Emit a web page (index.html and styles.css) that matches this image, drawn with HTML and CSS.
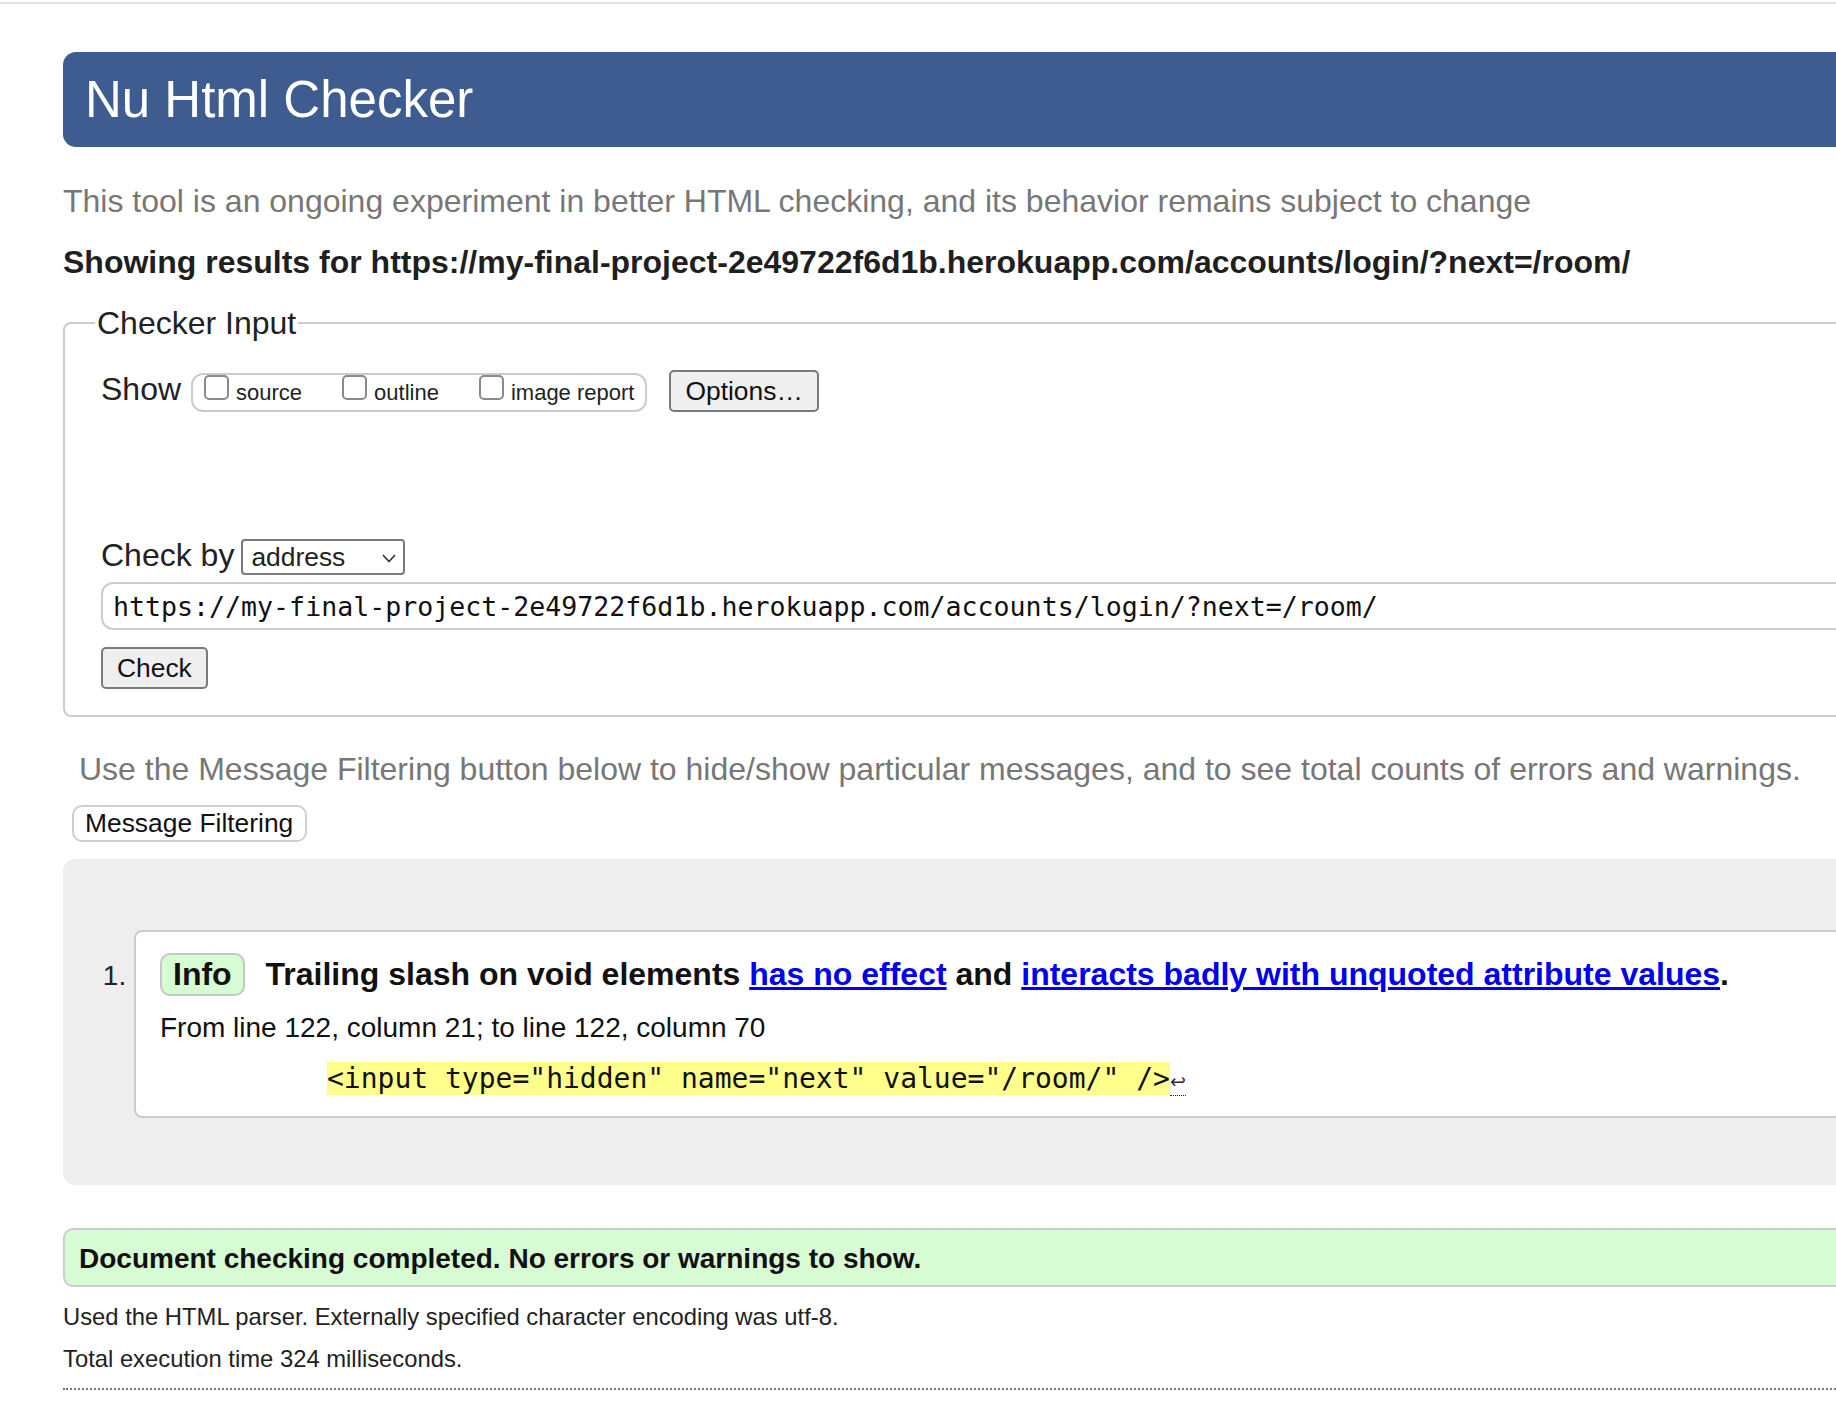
FILE: index.html
```html
<!DOCTYPE html>
<html lang="en">
<head>
<meta charset="utf-8">
<title>Showing results for https://my-final-project-2e49722f6d1b.herokuapp.com/accounts/login/?next=/room/ - Nu Html Checker</title>
<link rel="stylesheet" href="styles.css">
</head>
<body>
<div class="topline"></div>
<div class="page">
  <h1 class="title">Nu Html Checker</h1>
  <p class="intro">This tool is an ongoing experiment in better HTML checking, and its behavior remains subject to change</p>
  <p class="showing">Showing results for https://my-final-project-2e49722f6d1b.herokuapp.com/accounts/login/?next=/room/</p>

  <form class="checker">
    <fieldset class="input-set">
      <legend>Checker Input</legend>
      <div class="show-row">
        <span class="show-label">Show</span>
        <span class="show-group">
          <label class="opt"><input type="checkbox" class="box">source</label>
          <label class="opt"><input type="checkbox" class="box">outline</label>
          <label class="opt"><input type="checkbox" class="box">image report</label>
        </span>
        <button type="button" class="btn">Options…</button>
      </div>
      <div class="by-row">
        <span class="by-label">Check by</span>
        <span class="select"><span class="select-text">address</span><svg class="chev" width="14" height="9" viewBox="0 0 14 9"><path d="M1 1 L7 7.5 L13 1" fill="none" stroke="#333" stroke-width="1.6"/></svg></span>
      </div>
      <input class="url" type="text" value="https://my-final-project-2e49722f6d1b.herokuapp.com/accounts/login/?next=/room/">
      <div class="check-wrap"><button type="button" class="btn">Check</button></div>
    </fieldset>
  </form>

  <p class="filter-note">Use the Message Filtering button below to hide/show particular messages, and to see total counts of errors and warnings.</p>
  <button type="button" class="filter-btn">Message Filtering</button>

  <div class="results">
    <ol class="messages">
      <li class="message">
        <p class="msg-head"><strong class="badge">Info</strong> <span>Trailing slash on void elements <a href="#">has no effect</a> and <a href="#">interacts badly with unquoted attribute values</a>.</span></p>
        <p class="location">From line 122, column 21; to line 122, column 70</p>
        <p class="extract"><code><mark class="hl">&lt;input type="hidden" name="next" value="/room/" /&gt;</mark><span class="lf">↩</span></code></p>
      </li>
    </ol>
  </div>

  <p class="done">Document checking completed. No errors or warnings to show.</p>
  <p class="details">Used the HTML parser. Externally specified character encoding was utf-8.</p>
  <p class="details details-time">Total execution time 324 milliseconds.</p>
  <div class="footer-rule"></div>
</div>
</body>
</html>
```

FILE: styles.css
```css
html {
  overflow: hidden;
}

body {
  margin: 0;
  font-family: "Liberation Sans", Arial, sans-serif;
  color: #222;
  background: #fff;
}

.topline {
  margin-top: 2px;
  height: 2px;
  background: #e3e3e3;
}

.page {
  width: 2000px;
  padding-left: 63px;
}

.title {
  margin: 48px 0 0;
  height: 95px;
  padding-left: 22px;
  background: #3e5c8f;
  border-radius: 13px 0 0 13px;
  color: #fff;
  font-size: 51px;
  font-weight: normal;
  line-height: 95px;
}

.intro {
  margin: 34px 0 0;
  font-size: 32px;
  line-height: 40px;
  color: #777;
}

.showing {
  margin: 21px 0 0;
  font-size: 32px;
  line-height: 40px;
  font-weight: bold;
  color: #1f1f1f;
}

.checker {
  margin: 21px 0 0;
}

.input-set {
  margin: 0;
  padding: 26px 0 26px 36px;
  border: 2px solid #ccc;
  border-radius: 8px;
  min-width: 0;
}

.input-set legend {
  margin-left: -6px;
  padding: 0 2px;
  font-size: 32px;
  line-height: 40px;
  color: #222;
}

.show-row {
  display: flex;
  align-items: baseline;
}

.show-label {
  font-size: 32px;
  line-height: 40px;
  margin-right: 10px;
}

.show-group {
  display: flex;
  height: 39px;
  box-sizing: border-box;
  padding: 0 11px;
  border: 2px solid #cbcbcb;
  border-radius: 12px;
}

.opt {
  display: block;
  font-size: 22px;
  line-height: 35px;
  color: #222;
}

.opt + .opt {
  margin-left: 40px;
}

.box {
  -webkit-appearance: none;
  appearance: none;
  display: inline-block;
  width: 25px;
  height: 25px;
  margin: 0 7px 0 0;
  box-sizing: border-box;
  border: 2px solid #8a8a8a;
  border-radius: 5px;
  background: #fff;
  vertical-align: baseline;
}

.btn {
  height: 42px;
  box-sizing: border-box;
  padding: 0 14px;
  margin: 0;
  border: 2px solid #7a7a7a;
  border-radius: 5px;
  background: #efefef;
  font-family: "Liberation Sans", Arial, sans-serif;
  font-size: 26.4px;
  line-height: 38px;
  color: #111;
}

.show-row .btn {
  margin-left: 22px;
}

.by-row {
  display: flex;
  align-items: baseline;
  margin-top: 123px;
}

.by-label {
  font-size: 32px;
  line-height: 40px;
  margin-right: 7px;
}

.select {
  display: flex;
  align-items: center;
  width: 164px;
  height: 36px;
  box-sizing: border-box;
  padding: 1px 7px 0 8px;
  border: 2px solid #7a7a7a;
  border-radius: 4px;
  background: #fff;
  font-size: 26.4px;
}

.chev {
  margin-left: auto;
  margin-top: 2px;
}

.url {
  display: block;
  width: 100%;
  height: 48px;
  box-sizing: border-box;
  margin: 7px 0 0;
  padding: 0 0 0 10px;
  border: 2px solid #ccc;
  border-radius: 12px 0 0 12px;
  font-family: "DejaVu Sans Mono", "Liberation Mono", monospace;
  font-size: 26.6px;
  color: #111;
  background: #fff;
}

.check-wrap {
  margin-top: 17px;
}

.filter-note {
  margin: 32px 0 0 16px;
  font-size: 32px;
  line-height: 40px;
  color: #777;
}

.filter-btn {
  display: block;
  height: 37px;
  box-sizing: border-box;
  margin: 16px 0 0 9px;
  padding: 0 12px 0 11px;
  border: 2px solid #cfcfcf;
  border-radius: 10px;
  background: #fff;
  font-family: "Liberation Sans", Arial, sans-serif;
  font-size: 26.4px;
  line-height: 33px;
  color: #111;
}

.results {
  margin-top: 17px;
  padding: 71px 0 67px 71px;
  background: #eee;
  border-radius: 12px 0 0 12px;
}

.messages {
  margin: 0;
  padding: 0;
}

.message {
  padding: 21px 0 19px 24px;
  border: 2px solid #ccc;
  border-radius: 8px 0 0 8px;
  background: #fff;
}

.message::marker {
  font-size: 28px;
  color: #222;
}

.msg-head {
  margin: 0;
  font-size: 32px;
  line-height: 40px;
  font-weight: bold;
  color: #111;
}

.badge {
  display: inline-block;
  padding: 0 11px;
  margin-right: 12px;
  border: 2px solid #c6c6c6;
  border-radius: 10px;
  background: #d6fcd4;
  line-height: 39px;
}

.msg-head a {
  color: #0000ee;
  text-decoration: underline;
}

.location {
  margin: 14px 0 0;
  font-size: 28px;
  line-height: 36px;
  color: #111;
}

.extract {
  margin: 15px 0 0;
  padding-left: 167px;
  font-family: "DejaVu Sans Mono", "Liberation Mono", monospace;
  font-size: 28px;
  line-height: 36px;
}

.extract code {
  font-family: inherit;
  font-size: inherit;
}

.hl {
  background: #ffff8c;
  color: #111;
}

.lf {
  display: inline-block;
  padding-bottom: 3px;
  border-bottom: 1px dotted #222;
  font-family: "DejaVu Sans", sans-serif;
  font-size: 19px;
  line-height: 22px;
  color: #333;
}

.done {
  margin: 43px 0 0;
  padding: 10.5px 0 8.5px 14px;
  border: 2px solid #ccc;
  border-radius: 10px 0 0 10px;
  background: #d7fcd4;
  font-size: 28px;
  line-height: 36px;
  font-weight: bold;
  color: #111;
}

.details {
  margin: 15px 0 0;
  font-size: 23.8px;
  line-height: 30px;
  color: #222;
}

.details-time {
  margin-top: 12px;
}

.footer-rule {
  margin-top: 14px;
  border-top: 2px dotted #777;
}
```
